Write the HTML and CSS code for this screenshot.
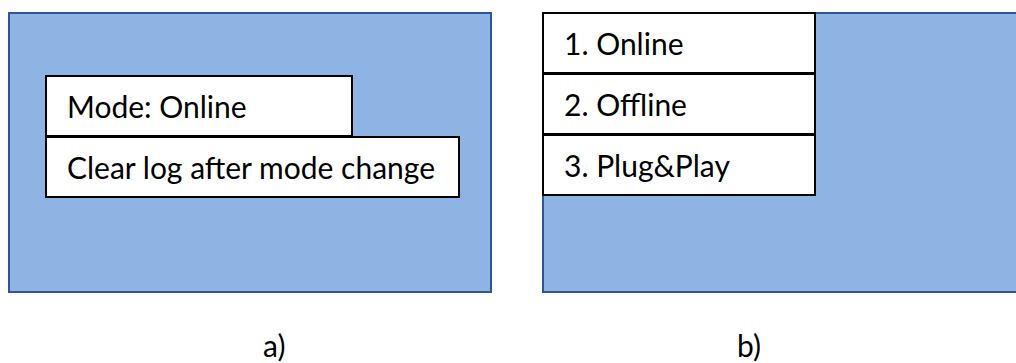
FILE: index.html
```html
<!DOCTYPE html>
<html lang="en">
<head>
    <meta charset="UTF-8">
    <meta name="viewport" content="width=device-width, initial-scale=1.0">
    <title>Mode selection</title>
    <link rel="stylesheet" href="styles.css">
</head>
<body>

    <div class="figure figure-a">
        <div class="screen screen-a">
            <div class="menu">
                <div class="item item-mode">Mode: Online</div>
                <div class="item item-clear">Clear log after mode change</div>
            </div>
        </div>
        <p class="caption caption-a">a)</p>
    </div>

    <div class="figure figure-b">
        <div class="screen screen-b">
            <div class="list">
                <div class="item">1. Online</div>
                <div class="item">2. Offline</div>
                <div class="item">3. Plug&amp;Play</div>
            </div>
        </div>
        <p class="caption caption-b">b)</p>
    </div>

</body>
</html>
```

FILE: styles.css
```css
body {
    margin: 0;
    padding: 12px 0 0 8px;
    display: flex;
    gap: 50px;
    overflow: hidden;
    height: 363px;
    box-sizing: border-box;
    background-color: white;
    font-family: Lato, "Open Sans", sans-serif;
    color: black;
}
.figure {
    display: flex;
    flex-direction: column;
    flex-shrink: 0;
}
.screen {
    height: 288px;
    background-color: #8eb4e3;
    border: 2px solid #2f5597;
    box-sizing: border-box;
}
.screen-a {
    width: 484px;
    padding: 61px 0 0 35px;
}
.screen-b {
    width: 520px;
}
.menu {
    display: flex;
    flex-direction: column;
    align-items: flex-start;
}
.item {
    height: 62px;
    display: flex;
    align-items: center;
    padding-left: 20px;
    font-size: 30px;
    background-color: white;
    border: 2px solid black;
    box-sizing: border-box;
}
.item-mode {
    width: 308px;
}
.item-clear {
    width: 415px;
    margin-top: -1px;
}
.list {
    width: 274px;
    margin: -2px 0 0 -2px;
}
.list .item {
    padding-left: 20px;
    margin-top: -1px;
}
.list .item:first-child {
    margin-top: 0;
}
.caption {
    margin: 0;
    padding-top: 34px;
    font-size: 30px;
}
.caption-a {
    padding-left: 255px;
}
.caption-b {
    padding-left: 195px;
}
```
